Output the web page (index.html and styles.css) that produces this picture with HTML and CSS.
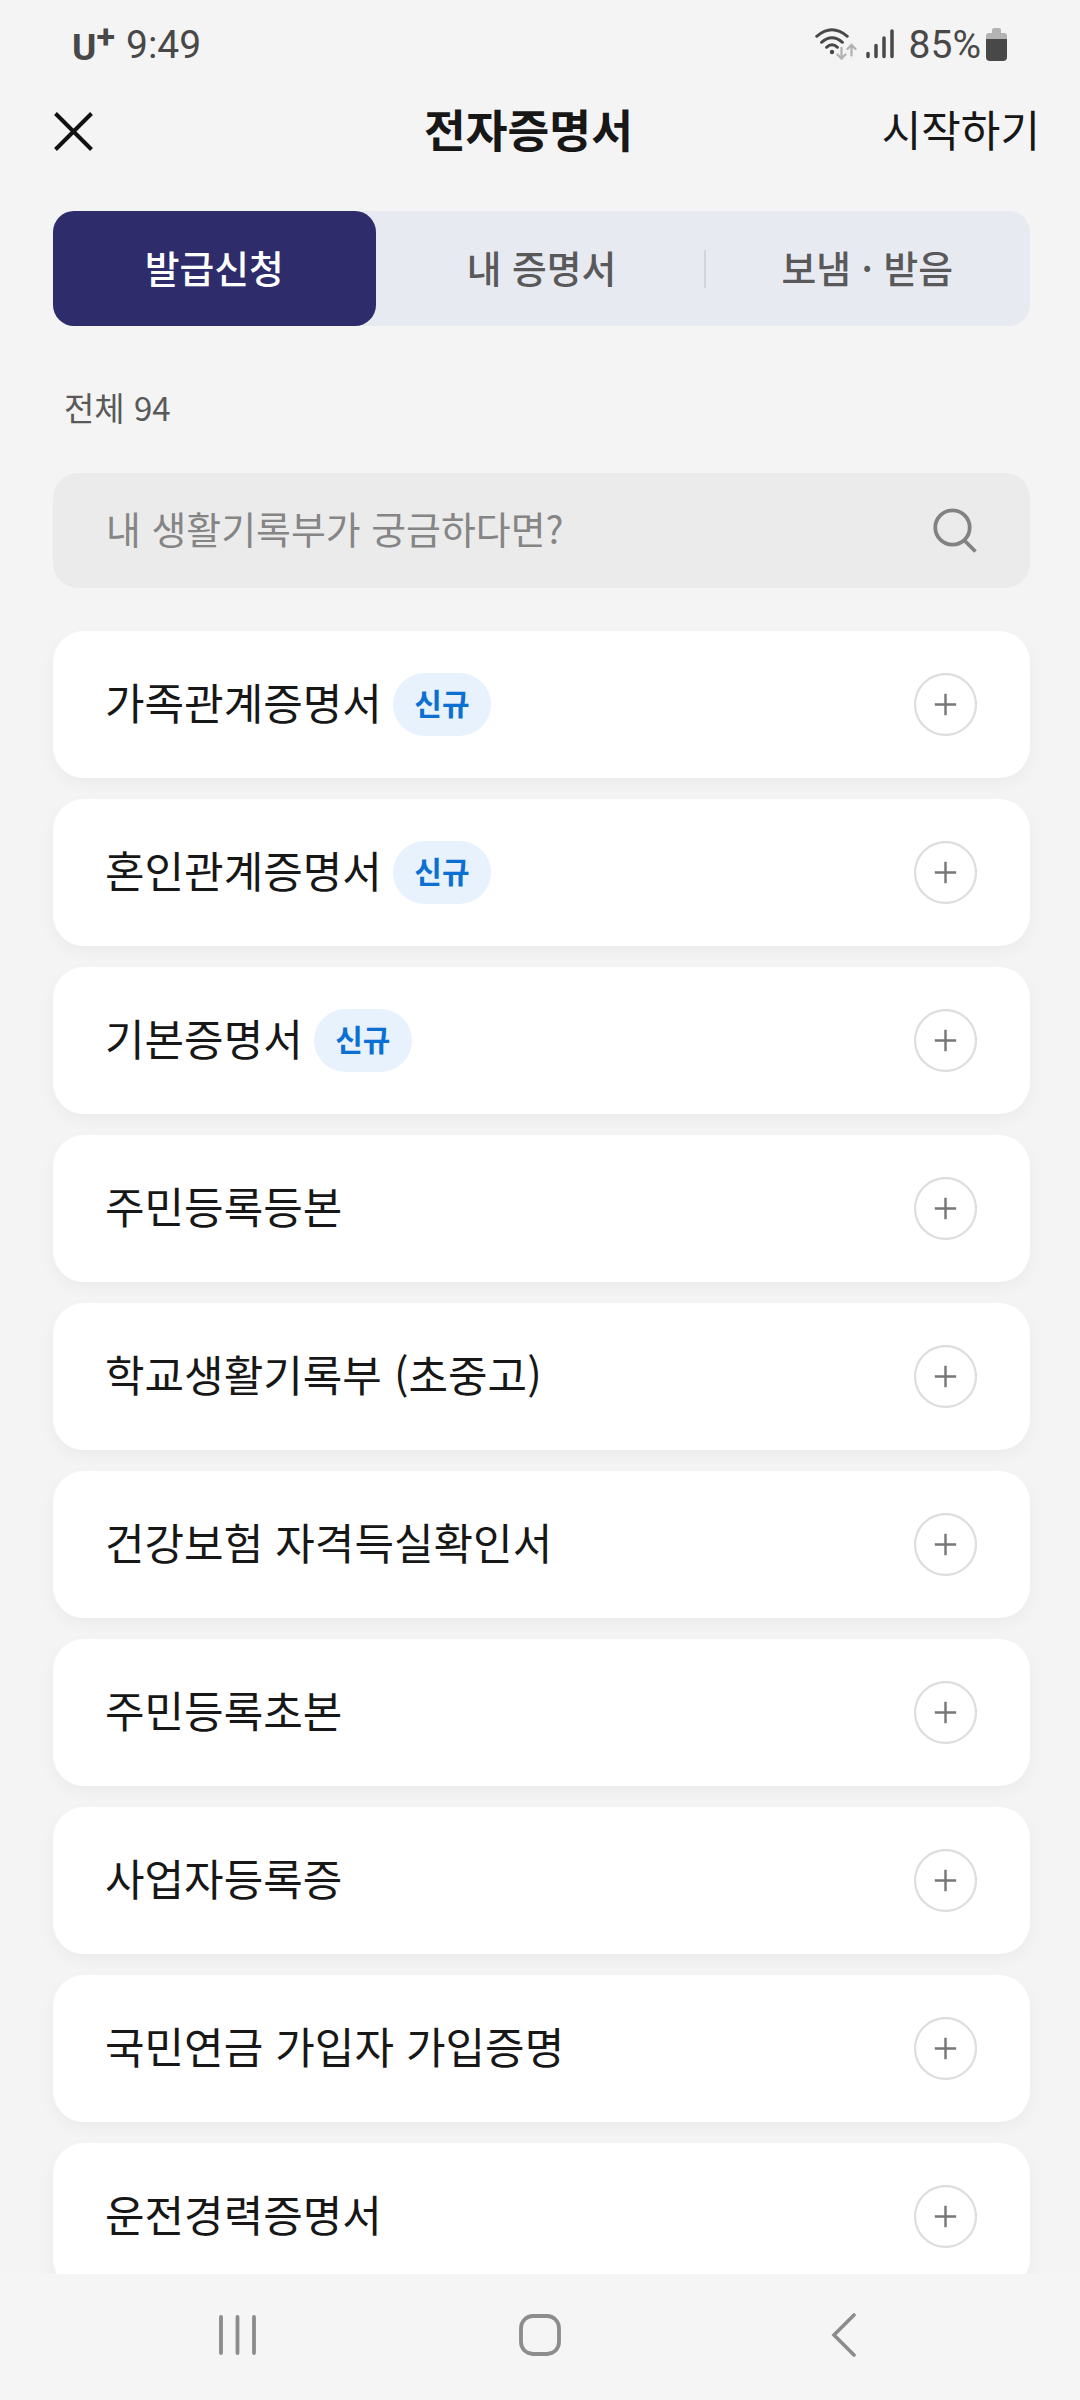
FILE: index.html
```
<!DOCTYPE html>
<html lang="ko">
<head>
    <meta charset="UTF-8">
    <meta name="viewport" content="width=device-width, initial-scale=1.0">
    <title>전자증명서</title>
    <link rel="stylesheet" href="styles.css">
</head>
<body>
    <svg class="sprite">
        <symbol id="plus" viewBox="0 0 62 62">
            <circle cx="31" cy="31" r="30" fill="none" stroke="#dedede" stroke-width="2.2"/>
            <path d="M20.5 31h21M31 20.5v21" fill="none" stroke="#777" stroke-width="2.4"/>
        </symbol>
    </svg>

    <div class="status-bar">
        <div class="status-left">
            <span class="carrier">U<span class="carrier-plus">+</span></span>
            <span class="time">9:49</span>
        </div>
        <div class="status-right">
            <svg class="wifi" width="42" height="34" viewBox="0 0 42 34" fill="none" stroke-linecap="round">
                <g stroke="#484848" stroke-width="2.9">
                    <path d="M1.7 9.3Q17 -3.8 32.3 9.3"/>
                    <path d="M6.5 15.3Q17 6 27.5 15.3"/>
                    <path d="M11.5 20.3Q17 15.4 22.5 20.3"/>
                </g>
                <circle cx="17" cy="25" r="2.2" fill="#484848"/>
                <path d="M26.5 21v10M22.5 27.5l4 4 4-4M36.5 28.5v-10M32.5 22l4-4 4 4" stroke="#b3b3b3" stroke-width="2.3"/>
            </svg>
            <svg class="signal" width="28" height="30" viewBox="0 0 28 30" stroke="#484848" stroke-width="3.5" stroke-linecap="round">
                <path d="M2 24.5v3M10 16.5v11M18 9v18.5M26 2v25.5"/>
            </svg>
            <span class="percent">85%</span>
            <svg class="battery" width="21" height="33" viewBox="0 0 21 33">
                <path d="M6 2q0-2 2-2h5q2 0 2 2v3h3q3 0 3 3v4H0V8q0-3 3-3h3z" fill="#b3b3b3"/>
                <path d="M0 11h21v18q0 4-4 4H4q-4 0-4-4z" fill="#484848"/>
            </svg>
        </div>
    </div>

    <header class="header">
        <svg class="close" width="39" height="39" viewBox="0 0 39 39">
            <path d="M1.5 1.5l36 36M37.5 1.5l-36 36" stroke="#111" stroke-width="4"/>
        </svg>
        <h1 class="title">전자증명서</h1>
        <span class="start">시작하기</span>
    </header>

    <main class="content">
        <nav class="tabs">
            <div class="tab active">발급신청</div>
            <div class="tab">내 증명서</div>
            <div class="tab divided">보냄 · 받음</div>
        </nav>

        <p class="count">전체 94</p>

        <div class="search">
            <span class="placeholder">내 생활기록부가 궁금하다면?</span>
            <svg width="45" height="46" viewBox="0 0 45 46" fill="none" stroke="#828282" stroke-width="3.8">
                <circle cx="20.5" cy="20.5" r="17.2"/>
                <path d="M32 33l11.5 11.5"/>
            </svg>
        </div>

        <ul class="list">
            <li class="item"><span class="name">가족관계증명서</span><span class="badge">신규</span><svg class="add"><use href="#plus"/></svg></li>
            <li class="item"><span class="name">혼인관계증명서</span><span class="badge">신규</span><svg class="add"><use href="#plus"/></svg></li>
            <li class="item"><span class="name">기본증명서</span><span class="badge">신규</span><svg class="add"><use href="#plus"/></svg></li>
            <li class="item"><span class="name">주민등록등본</span><svg class="add"><use href="#plus"/></svg></li>
            <li class="item"><span class="name">학교생활기록부 (초중고)</span><svg class="add"><use href="#plus"/></svg></li>
            <li class="item"><span class="name">건강보험 자격득실확인서</span><svg class="add"><use href="#plus"/></svg></li>
            <li class="item"><span class="name">주민등록초본</span><svg class="add"><use href="#plus"/></svg></li>
            <li class="item"><span class="name">사업자등록증</span><svg class="add"><use href="#plus"/></svg></li>
            <li class="item"><span class="name">국민연금 가입자 가입증명</span><svg class="add"><use href="#plus"/></svg></li>
            <li class="item"><span class="name">운전경력증명서</span><svg class="add"><use href="#plus"/></svg></li>
        </ul>
    </main>

    <footer class="nav-bar">
        <svg width="40" height="42" viewBox="0 0 40 42" stroke="#8c8c8c" stroke-width="3.8" stroke-linecap="round">
            <path d="M3 3v36M19.5 3v36M36 3v36"/>
        </svg>
        <svg class="home" width="42" height="42" viewBox="0 0 42 42" fill="none" stroke="#8c8c8c" stroke-width="3.8">
            <rect x="2" y="2" width="38" height="38" rx="12"/>
        </svg>
        <svg width="26" height="44" viewBox="0 0 26 44" fill="none" stroke="#8c8c8c" stroke-width="3.6" stroke-linecap="round">
            <path d="M23 2L3 22l20 20"/>
        </svg>
    </footer>
</body>
</html>
```
FILE: styles.css
```
:root {
    --background: #f4f4f4;
    --foreground: #171717;
    --primary: #2e2c6b;
    --tab: #e8eaf2;
    --muted: #595959;
    --status: #484848;
}

* {
    box-sizing: border-box;
}

body {
    display: flex;
    flex-direction: column;
    width: 1080px;
    height: 2400px;
    margin: 0;
    overflow: hidden;
    font-family: "Noto Sans CJK KR", sans-serif;
    color: var(--foreground);
    background-color: var(--background);
}

svg {
    flex: none;
    display: block;
}

.sprite {
    position: absolute;
    width: 0;
    height: 0;
}

/* Status bar */
.status-bar {
    flex: none;
    display: flex;
    justify-content: space-between;
    height: 88px;
    padding: 0 72px 0 72px;
    font-family: Roboto, sans-serif;
    font-size: 39px;
    line-height: 88px;
    color: var(--status);
}

.status-left,
.status-right {
    display: flex;
    align-items: center;
}

.status-left {
    padding-top: 1px;
}

.carrier {
    width: 54px;
    padding-top: 6px;
    font-weight: 700;
    font-size: 37px;
    white-space: nowrap;
}

.carrier-plus {
    font-size: 34px;
    vertical-align: 12px;
    line-height: 0;
}

.percent {
    padding-top: 1px;
}

.signal {
    margin: 0 15px 0 9px;
}

.battery {
    margin: 1px 1px 0 5px;
}

/* Header */
.header {
    flex: none;
    display: grid;
    grid-template-columns: 1fr auto 1fr;
    align-items: center;
    height: 86px;
    padding: 0 40px 0 54px;
}

.title {
    margin: 0 37px 7px 0;
    font-size: 45.4px;
    line-height: 60px;
    font-weight: 700;
}

.start {
    justify-self: end;
    margin-bottom: 7px;
    font-size: 43px;
    line-height: 60px;
}

/* Content */
.content {
    flex: 1;
    min-height: 0;
    padding: 37px 50px 0 53px;
    overflow: hidden;
}

.tabs {
    display: grid;
    grid-template-columns: repeat(3, 1fr);
    height: 115px;
    border-radius: 21px;
    background-color: var(--tab);
}

.tab {
    display: flex;
    align-items: center;
    justify-content: center;
    padding-bottom: 5px;
    font-size: 37.8px;
    font-weight: 500;
    color: var(--muted);
}

.tab.active {
    margin-right: 3px;
    border-radius: 21px;
    color: #fff;
    background-color: var(--primary);
}

.tab.divided {
    background: linear-gradient(#d3d5de, #d3d5de) left center / 2px 38px no-repeat;
}

.count {
    margin: 57px 0 0 11px;
    font-size: 33px;
    line-height: 48px;
    color: var(--muted);
}

.search {
    display: flex;
    align-items: center;
    justify-content: space-between;
    height: 115px;
    margin-top: 42px;
    padding: 0 53px 2px;
    border-radius: 25px;
    background-color: #ebebeb;
}

.placeholder {
    margin-bottom: 4px;
    font-size: 37.9px;
    color: #858585;
}

.list {
    display: flex;
    flex-direction: column;
    gap: 21px;
    margin: 43px 0 0;
    padding: 0;
    list-style: none;
}

.item {
    flex: none;
    display: flex;
    align-items: center;
    height: 147px;
    padding: 0 53px 0 52px;
    border-radius: 31px;
    background-color: #fff;
    box-shadow: 0 6px 16px rgba(0, 0, 0, 0.04);
}

.name {
    margin-bottom: 8px;
    font-size: 43px;
    line-height: 60px;
}

.badge {
    width: 98px;
    height: 63px;
    margin-left: 11px;
    border-radius: 32px;
    font-size: 30px;
    line-height: 59px;
    font-weight: 700;
    text-align: center;
    color: #0c70d2;
    background-color: #e8f2fc;
}

.add {
    width: 63px;
    height: 63px;
    margin-left: auto;
}

/* Bottom navigation */
.nav-bar {
    flex: none;
    display: flex;
    align-items: center;
    justify-content: space-between;
    height: 126px;
    padding: 0 223px 4px 218px;
    background-color: #f5f5f5;
}

.home {
    margin-right: 10px;
}
```
